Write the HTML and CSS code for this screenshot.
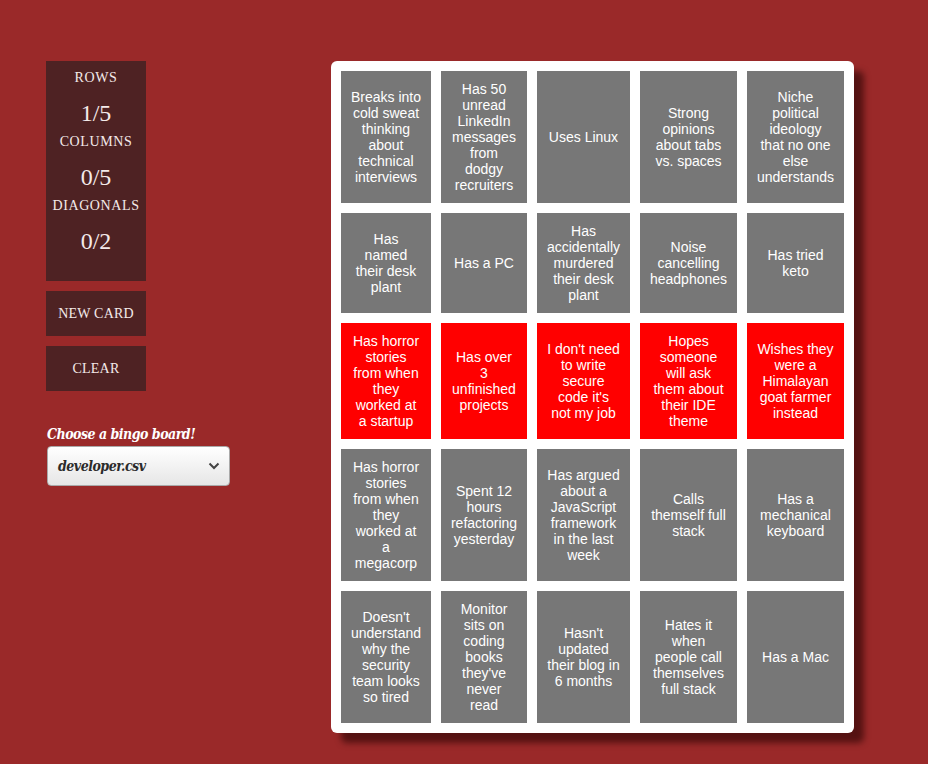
FILE: index.html
```html
<!DOCTYPE html>
<html>
<head>
<meta charset="utf-8">
<title>Bingo</title>
<link rel="stylesheet" href="styles.css">
</head>
<body>
<div class="page">
  <aside class="sidebar">
    <div class="stats">
      <div class="stat-label">ROWS</div>
      <div class="stat-value">1/5</div>
      <div class="stat-label">COLUMNS</div>
      <div class="stat-value">0/5</div>
      <div class="stat-label">DIAGONALS</div>
      <div class="stat-value">0/2</div>
    </div>
    <div class="btn">NEW CARD</div>
    <div class="btn">CLEAR</div>
    <div class="chooser">
      <div class="chooser-label">Choose a bingo board!</div>
      <div class="select-box">
        <span class="select-text">developer.csv</span>
        <svg class="chevron" width="12" height="8" viewBox="0 0 12 8"><path d="M1.5 1.5 L6 6 L10.5 1.5" fill="none" stroke="#444" stroke-width="2"/></svg>
      </div>
    </div>
  </aside>
  <main class="board">
    <div class="cell">Breaks into cold sweat thinking about technical interviews</div>
    <div class="cell">Has 50 unread LinkedIn messages from dodgy recruiters</div>
    <div class="cell">Uses Linux</div>
    <div class="cell">Strong opinions about tabs vs. spaces</div>
    <div class="cell">Niche political ideology that no one else understands</div>

    <div class="cell">Has named their desk plant</div>
    <div class="cell">Has a PC</div>
    <div class="cell">Has accidentally murdered their desk plant</div>
    <div class="cell">Noise cancelling headphones</div>
    <div class="cell">Has tried keto</div>

    <div class="cell on">Has horror stories from when they worked at a startup</div>
    <div class="cell on">Has over 3 unfinished projects</div>
    <div class="cell on">I don't need to write secure code it's not my job</div>
    <div class="cell on">Hopes someone will ask them about their IDE theme</div>
    <div class="cell on">Wishes they were a Himalayan goat farmer instead</div>

    <div class="cell">Has horror stories from when they worked at a megacorp</div>
    <div class="cell">Spent 12 hours refactoring yesterday</div>
    <div class="cell">Has argued about a JavaScript framework in the last week</div>
    <div class="cell">Calls themself full stack</div>
    <div class="cell">Has a mechanical keyboard</div>

    <div class="cell">Doesn't understand why the security team looks so tired</div>
    <div class="cell">Monitor sits on coding books they've never read</div>
    <div class="cell">Hasn't updated their blog in 6 months</div>
    <div class="cell">Hates it when people call themselves full stack</div>
    <div class="cell">Has a Mac</div>
  </main>
</div>
</body>
</html>
```
FILE: styles.css
```css
html, body {
  margin: 0;
  padding: 0;
}
body {
  background: #9a2929;
  width: 928px;
  height: 764px;
  overflow: hidden;
}
.page {
  display: grid;
  grid-template-columns: 285px 523px;
  padding: 61px 0 0 46px;
  align-items: start;
}
.sidebar {
  display: flex;
  flex-direction: column;
  font-family: "Liberation Serif", "Times New Roman", serif;
  color: #f4eaea;
}
.stats {
  width: 100px;
  background: #4e2223;
  padding: 9px 0 19px;
  text-align: center;
}
.stat-label {
  font-size: 14px;
  line-height: 16px;
  letter-spacing: 0.6px;
}
.stat-value {
  font-size: 24px;
  line-height: 28px;
  margin: 13px 0 7px;
}
.btn {
  width: 100px;
  height: 45px;
  margin-top: 10px;
  background: #4e2223;
  display: flex;
  align-items: center;
  justify-content: center;
  font-size: 14px;
  letter-spacing: 0.2px;
}
.chooser {
  margin-top: 33px;
  display: flex;
  flex-direction: column;
  gap: 2px;
}
.chooser-label {
  font-family: "DejaVu Serif Condensed", "DejaVu Serif", serif;
  font-style: italic;
  font-weight: bold;
  font-size: 14px;
  line-height: 20px;
  color: #ffffff;
  padding-left: 1px;
  letter-spacing: -0.5px;
}
.select-box {
  box-sizing: border-box;
  width: 183px;
  height: 40px;
  margin-left: 1px;
  border: 1px solid #a9a9a9;
  border-radius: 4px;
  background: linear-gradient(#ffffff, #e6e6e6);
  display: flex;
  align-items: center;
  justify-content: space-between;
  padding: 0 9px 0 10px;
}
.select-text {
  font-family: "DejaVu Serif Condensed", "DejaVu Serif", serif;
  font-style: italic;
  font-weight: bold;
  font-size: 14px;
  color: #2b2b2b;
  letter-spacing: -0.5px;
}
.chevron {
  display: block;
}
.board {
  background: #ffffff;
  border-radius: 6px;
  box-shadow: 10px 10px 6px rgba(30, 0, 0, 0.55);
  padding: 10px;
  display: grid;
  grid-template-columns: 90px 86px 93px 97px 97px;
  gap: 10px;
}
.cell {
  background: #777777;
  color: #ffffff;
  font-family: "Liberation Sans", Arial, sans-serif;
  font-size: 14px;
  line-height: 16px;
  padding: 10px;
  text-align: center;
  display: flex;
  align-items: center;
  justify-content: center;
}
.cell:nth-child(5n+1) {
  padding-left: 9.6px;
  padding-right: 9.6px;
}
.cell.on {
  background: #ff0000;
}
```
